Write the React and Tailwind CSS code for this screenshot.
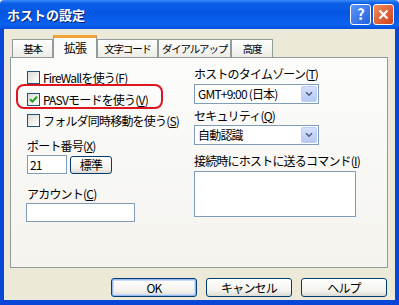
const font = "font-['Noto_Sans_CJK_JP','Liberation_Sans',sans-serif]";

function Key({ k }) {
  return (
    <>
      (<span className="underline underline-offset-1">{k}</span>)
    </>
  );
}

function CheckBox({ checked }) {
  return (
    <span className="flex h-[13px] w-[13px] shrink-0 items-center justify-center border border-[#1c5180] bg-[linear-gradient(135deg,#dcdcd7,#ffffff)]">
      {checked && (
        <svg width="9" height="9" viewBox="0 0 9 9">
          <path d="M1 4.2 L3.4 6.6 L8 1.8" fill="none" stroke="#21a121" strokeWidth="2" />
        </svg>
      )}
    </span>
  );
}

function CheckRow({ checked, children, className = '' }) {
  return (
    <div className={`flex h-[13px] items-center gap-[3px] ${className}`}>
      <CheckBox checked={checked} />
      <span className="whitespace-nowrap leading-[13px]">{children}</span>
    </div>
  );
}

function Combo({ value }) {
  return (
    <div className="flex h-[20px] w-[125px] items-center border border-[#7f9db9] bg-white pl-[3px] pr-[1px]">
      <span className="flex-1 whitespace-nowrap leading-[14px]">{value}</span>
      <span className="flex h-[16px] w-[16px] items-center justify-center rounded-[2px] border border-[#b9cff7] bg-[linear-gradient(180deg,#d4e1fb,#b6c9f5)]">
        <svg width="8" height="6" viewBox="0 0 8 6">
          <path d="M1 1.2 L4 4.2 L7 1.2" fill="none" stroke="#4d6185" strokeWidth="1.6" />
        </svg>
      </span>
    </div>
  );
}

function XpButton({ children, primary, className = '' }) {
  return (
    <button
      type="button"
      className={`flex items-center justify-center whitespace-nowrap rounded-[3px] border border-[#003c74] bg-[linear-gradient(180deg,#ffffff,#f3f2ec_70%,#dcdad2)] leading-none ${
        primary ? 'shadow-[inset_0_0_0_1px_#9ab8f0,inset_0_0_0_2px_#c9dbfa]' : ''
      } ${className}`}
    >
      {children}
    </button>
  );
}

export default function App() {
  const tabs = ['基本', '拡張', '文字コード', 'ダイアルアップ', '高度'];
  const widths = ['w-[41px]', 'w-[44px]', 'w-[61px]', 'w-[73px]', 'w-[42px]'];

  return (
    <div className={`flex h-[305px] w-[399px] flex-col overflow-hidden text-[12px] tracking-[-0.8px] text-black ${font}`}>
      <div className="flex h-[29px] shrink-0 items-center rounded-t-[4px] bg-[linear-gradient(180deg,#3d8bf7_0%,#0a5fe6_12%,#0556e3_45%,#0b62ef_85%,#0550dc_100%)] pl-[7px] pr-[5px]">
        <span className="flex-1 text-[13px] font-bold tracking-normal text-white [text-shadow:1px_1px_0_#0a1e6e]">ホストの設定</span>
        <span className="flex h-[21px] w-[21px] items-center justify-center rounded-[3px] border border-white bg-[linear-gradient(135deg,#5c96f8,#2460e0)] text-[15px] font-bold text-white">
          ?
        </span>
        <span className="ml-[2px] flex h-[21px] w-[21px] items-center justify-center rounded-[3px] border border-white bg-[linear-gradient(135deg,#f08a5c,#d2401a)]">
          <svg width="11" height="11" viewBox="0 0 11 11">
            <path d="M1.5 1.5 L9.5 9.5 M9.5 1.5 L1.5 9.5" stroke="white" strokeWidth="2.2" />
          </svg>
        </span>
      </div>

      <div className="flex flex-1 flex-col border-x-4 border-b-[5px] border-[#0846d8] bg-[#ece9d8] pl-[6px] pr-[7px] pt-[6px]">
        <div className="flex h-[22px] items-end pl-[2px]">
          {tabs.map((t, i) =>
            i === 1 ? (
              <div
                key={t}
                className={`relative z-10 mb-[-1px] flex h-[23px] shrink-0 ${widths[i]} items-center justify-center whitespace-nowrap border-x border-t-[3px] border-[#919b9c] border-t-[#f2a33a] bg-[#fbfbf9] pb-[1px] text-[12px]`}
              >
                {t}
              </div>
            ) : (
              <div
                key={t}
                className={`flex h-[18px] shrink-0 ${widths[i]} items-center justify-center whitespace-nowrap border-x border-t border-[#919b9c] bg-[linear-gradient(180deg,#ffffff,#ecebe5)] text-[10.5px] tracking-[-1.2px]`}
              >
                {t}
              </div>
            )
          )}
        </div>

        <div className="flex h-[211px] w-[378px] border border-[#919b9c] bg-[linear-gradient(180deg,#fcfcfb,#f4f3ee)] pl-[16px]">
          <div className="flex w-[167px] flex-col pt-[13px]">
            <CheckRow>
              FireWallを使う<Key k="F" />
            </CheckRow>
            <div className="relative mt-[9px]">
              <CheckRow checked>
                PASVモードを使う<Key k="V" />
              </CheckRow>
              <span className="pointer-events-none absolute left-[-11px] top-[-9px] h-[25px] w-[147px] rounded-[8px] border-2 border-[#e0141e]" />
            </div>
            <CheckRow className="mt-[8px]">
              フォルダ同時移動を使う<Key k="S" />
            </CheckRow>

            <div className="mt-[12px] leading-[14px]">
              ポート番号<Key k="X" />
            </div>
            <div className="mt-[2px] flex items-center gap-[3px]">
              <div className="flex h-[19px] w-[40px] items-center border border-[#7f9db9] bg-white pl-[2px] leading-none">21</div>
              <XpButton className="h-[18px] w-[42px]">標準</XpButton>
            </div>

            <div className="mt-[13px] leading-[14px]">
              アカウント<Key k="C" />
            </div>
            <div className="mt-[2px] ml-[-1px] h-[19px] w-[109px] border border-[#7f9db9] bg-white" />
          </div>

          <div className="flex flex-col pt-[9px]">
            <div className="whitespace-nowrap leading-[14px]">
              ホストのタイムゾーン<Key k="T" />
            </div>
            <div className="mt-[3px]">
              <Combo value="GMT+9:00 (日本)" />
            </div>
            <div className="mt-[5px] leading-[14px]">
              セキュリティ<Key k="Q" />
            </div>
            <div className="mt-[2px]">
              <Combo value="自動認識" />
            </div>
            <div className="mt-[9px] whitespace-nowrap leading-[14px]">
              接続時にホストに送るコマンド<Key k="I" />
            </div>
            <div className="mt-[3px] h-[46px] w-[162px] border border-[#7f9db9] bg-white" />
          </div>
        </div>

        <div className="mt-[10px] flex justify-end gap-[9px] pr-[1px]">
          <XpButton primary className="h-[19px] w-[86px]">OK</XpButton>
          <XpButton className="h-[19px] w-[86px]">キャンセル</XpButton>
          <XpButton className="h-[19px] w-[86px]">ヘルプ</XpButton>
        </div>
      </div>
    </div>
  );
}
